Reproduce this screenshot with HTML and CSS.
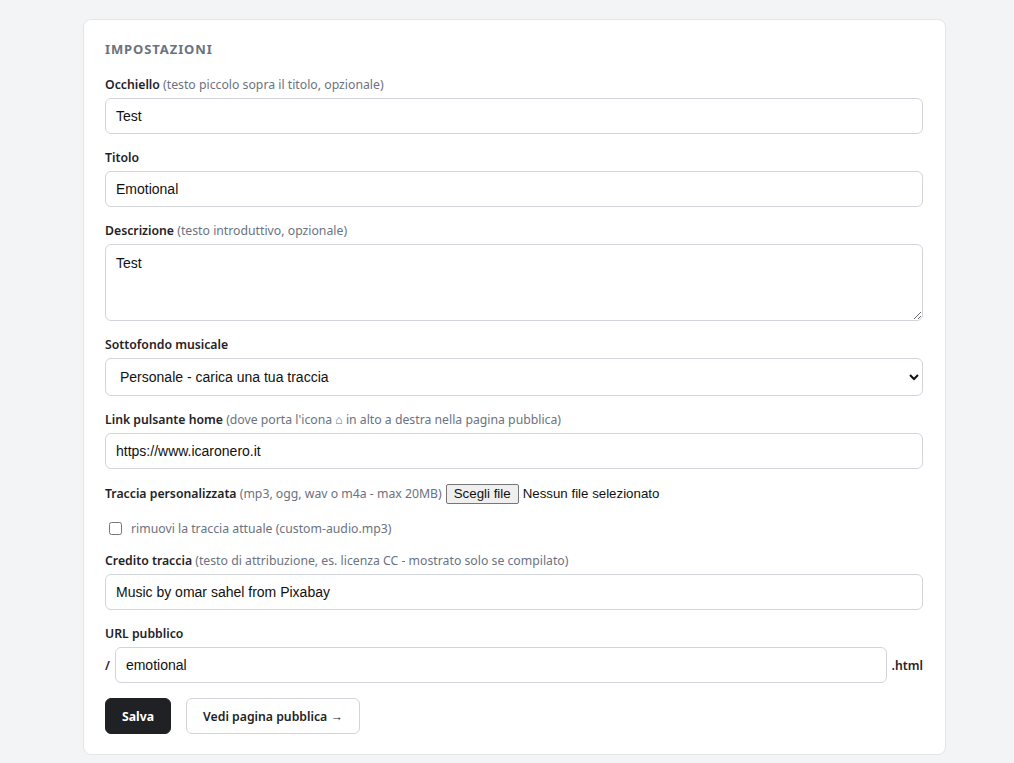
FILE: index.html
```html
<!DOCTYPE html>
<html lang="it">
<head>
  <meta charset="UTF-8">
  <meta name="viewport" content="width=device-width, initial-scale=1.0">
  <title>Impostazioni</title>
  <link rel="stylesheet" href="styles.css">
</head>
<body>
  <form class="card">
    <h2 class="card-title">Impostazioni</h2>

    <div class="field">
      <label class="label" for="occhiello">Occhiello <span class="hint">(testo piccolo sopra il titolo, opzionale)</span></label>
      <input class="input" type="text" id="occhiello" value="Test">
    </div>

    <div class="field">
      <label class="label" for="titolo">Titolo</label>
      <input class="input" type="text" id="titolo" value="Emotional">
    </div>

    <div class="field">
      <label class="label" for="descrizione">Descrizione <span class="hint">(testo introduttivo, opzionale)</span></label>
      <textarea class="input textarea" id="descrizione">Test</textarea>
    </div>

    <div class="field">
      <label class="label" for="musica">Sottofondo musicale</label>
      <select class="input select" id="musica">
        <option>Personale - carica una tua traccia</option>
        <option>Nessuna</option>
      </select>
    </div>

    <div class="field">
      <label class="label" for="home">Link pulsante home <span class="hint">(dove porta l'icona ⌂ in alto a destra nella pagina pubblica)</span></label>
      <input class="input" type="text" id="home" value="https://www.icaronero.it">
    </div>

    <div class="field file-row">
      <span class="label inline">Traccia personalizzata <span class="hint">(mp3, ogg, wav o m4a - max 20MB)</span></span>
      <label class="file-pick">
        <span class="file-btn">Scegli file</span>
        <span class="file-name">Nessun file selezionato</span>
      </label>
    </div>

    <div class="field check-row">
      <label class="check"><input type="checkbox"> rimuovi la traccia attuale (custom-audio.mp3)</label>
    </div>

    <div class="field">
      <label class="label" for="credito">Credito traccia <span class="hint">(testo di attribuzione, es. licenza CC - mostrato solo se compilato)</span></label>
      <input class="input" type="text" id="credito" value="Music by omar sahel from Pixabay">
    </div>

    <div class="field">
      <label class="label" for="slug">URL pubblico</label>
      <div class="url-row">
        <span class="affix">/</span>
        <input class="input" type="text" id="slug" value="emotional">
        <span class="affix">.html</span>
      </div>
    </div>

    <div class="actions">
      <button type="button" class="btn btn-dark">Salva</button>
      <button type="button" class="btn btn-light">Vedi pagina pubblica →</button>
    </div>
  </form>
</body>
</html>
```

FILE: styles.css
```css
body {
  margin: 0;
  padding: 19px 68px 0 83px;
  background-color: #f3f4f6;
  font-family: "Noto Sans", "Open Sans", sans-serif;
  color: #1f2328;
}
.card {
  background: #fff;
  border: 1px solid #e3e5e8;
  border-radius: 8px;
  padding: 20px 22px 20px 21px;
}
.card-title {
  margin: 0 0 17px;
  font-size: 13px;
  line-height: 18px;
  font-weight: 700;
  letter-spacing: 0.9px;
  text-transform: uppercase;
  color: #6b7280;
}
.field {
  margin-bottom: 14px;
}
.label {
  display: block;
  padding-top: 1px;
  margin-bottom: 4px;
  font-size: 12.25px;
  line-height: 18px;
  font-weight: 600;
  color: #1f2328;
}
.label.inline {
  display: inline;
  padding: 0;
  margin: 0;
}
.hint {
  font-weight: 400;
  color: #6b7280;
}
.input {
  display: block;
  box-sizing: border-box;
  width: 100%;
  height: 36px;
  padding: 0 10px;
  border: 1px solid #d1d5db;
  border-radius: 6px;
  background: #fff;
  font-family: "Liberation Sans", Arial, sans-serif;
  font-size: 14px;
  color: #111;
}
.textarea {
  height: 77px;
  padding: 10px;
  resize: vertical;
}
.select {
  height: 38px;
  padding: 0 10px;
}
.file-row {
  display: flex;
  align-items: center;
  gap: 4px;
  height: 21px;
}
.file-pick {
  display: flex;
  align-items: center;
  gap: 4px;
  font-family: "Liberation Sans", Arial, sans-serif;
  font-size: 13.3px;
  color: #111;
}
.file-btn {
  padding: 1px 7px;
  background: #efefef;
  border: 1px solid #767676;
  border-radius: 2px;
  line-height: 16px;
}
.check-row {
  height: 19px;
  padding-top: 1px;
  margin-bottom: 13px;
  padding-left: 4px;
}
.check {
  display: flex;
  align-items: center;
  gap: 6px;
  font-size: 12.25px;
  line-height: 19px;
  color: #6b7280;
}
.check input {
  margin: 0 3px 0 0;
  width: 13px;
  height: 13px;
}
.url-row {
  display: flex;
  align-items: center;
  gap: 5px;
}
.url-row .input {
  flex: 1;
}
.affix {
  font-size: 12.25px;
  font-weight: 600;
  color: #1f2328;
}
.actions {
  display: flex;
  gap: 15px;
  margin-top: 15px;
}
.btn {
  height: 36px;
  padding: 0 16px;
  border-radius: 6px;
  font-family: "Noto Sans", "Open Sans", sans-serif;
  font-size: 12.25px;
  font-weight: 600;
  cursor: pointer;
}
.btn-dark {
  background: #1f2124;
  border: 1px solid #1f2124;
  color: #fff;
  font-weight: 700;
}
.btn-light {
  background: #fff;
  border: 1px solid #d1d5db;
  color: #1f2328;
}
```
